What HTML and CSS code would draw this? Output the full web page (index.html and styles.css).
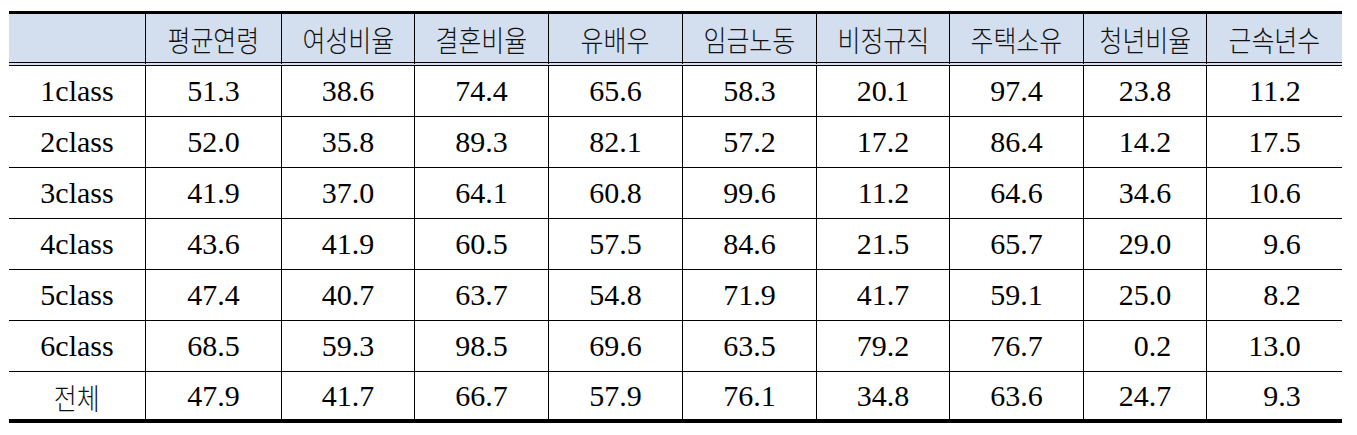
FILE: index.html
```html
<!DOCTYPE html>
<html lang="ko">
<head>
<meta charset="utf-8">
<title>계층별 특성</title>
<link rel="stylesheet" href="styles.css">
</head>
<body>
<div class="wrap">
<table class="stats">
  <colgroup>
    <col><col><col><col><col><col><col><col><col><col>
  </colgroup>
  <thead>
    <tr>
      <th></th>
      <th><span class="ko">평균연령</span></th>
      <th><span class="ko">여성비율</span></th>
      <th><span class="ko">결혼비율</span></th>
      <th><span class="ko">유배우</span></th>
      <th><span class="ko">임금노동</span></th>
      <th><span class="ko">비정규직</span></th>
      <th><span class="ko">주택소유</span></th>
      <th><span class="ko">청년비율</span></th>
      <th><span class="ko">근속년수</span></th>
    </tr>
  </thead>
  <tbody>
    <tr>
      <td>1class</td>
      <td><span class="num">51.3</span></td><td><span class="num">38.6</span></td><td><span class="num">74.4</span></td><td><span class="num">65.6</span></td><td><span class="num">58.3</span></td><td><span class="num">20.1</span></td><td><span class="num">97.4</span></td><td><span class="num">23.8</span></td><td><span class="num">11.2</span></td>
    </tr>
    <tr>
      <td>2class</td>
      <td><span class="num">52.0</span></td><td><span class="num">35.8</span></td><td><span class="num">89.3</span></td><td><span class="num">82.1</span></td><td><span class="num">57.2</span></td><td><span class="num">17.2</span></td><td><span class="num">86.4</span></td><td><span class="num">14.2</span></td><td><span class="num">17.5</span></td>
    </tr>
    <tr>
      <td>3class</td>
      <td><span class="num">41.9</span></td><td><span class="num">37.0</span></td><td><span class="num">64.1</span></td><td><span class="num">60.8</span></td><td><span class="num">99.6</span></td><td><span class="num">11.2</span></td><td><span class="num">64.6</span></td><td><span class="num">34.6</span></td><td><span class="num">10.6</span></td>
    </tr>
    <tr>
      <td>4class</td>
      <td><span class="num">43.6</span></td><td><span class="num">41.9</span></td><td><span class="num">60.5</span></td><td><span class="num">57.5</span></td><td><span class="num">84.6</span></td><td><span class="num">21.5</span></td><td><span class="num">65.7</span></td><td><span class="num">29.0</span></td><td><span class="num">9.6</span></td>
    </tr>
    <tr>
      <td>5class</td>
      <td><span class="num">47.4</span></td><td><span class="num">40.7</span></td><td><span class="num">63.7</span></td><td><span class="num">54.8</span></td><td><span class="num">71.9</span></td><td><span class="num">41.7</span></td><td><span class="num">59.1</span></td><td><span class="num">25.0</span></td><td><span class="num">8.2</span></td>
    </tr>
    <tr>
      <td>6class</td>
      <td><span class="num">68.5</span></td><td><span class="num">59.3</span></td><td><span class="num">98.5</span></td><td><span class="num">69.6</span></td><td><span class="num">63.5</span></td><td><span class="num">79.2</span></td><td><span class="num">76.7</span></td><td><span class="num">0.2</span></td><td><span class="num">13.0</span></td>
    </tr>
    <tr class="total">
      <td><span class="ko">전체</span></td>
      <td><span class="num">47.9</span></td><td><span class="num">41.7</span></td><td><span class="num">66.7</span></td><td><span class="num">57.9</span></td><td><span class="num">76.1</span></td><td><span class="num">34.8</span></td><td><span class="num">63.6</span></td><td><span class="num">24.7</span></td><td><span class="num">9.3</span></td>
    </tr>
  </tbody>
</table>
</div>
</body>
</html>
```

FILE: styles.css
```css
html, body {
  margin: 0;
  padding: 0;
  background: #ffffff;
}

.wrap {
  padding: 11px 0 0 9px;
}

.stats {
  width: 1333px;
  table-layout: fixed;
  border-collapse: separate;
  border-spacing: 0;
  border-top: 3px solid #000;
  font-family: "Liberation Serif", "Times New Roman", "Noto Sans CJK KR", serif;
  font-size: 30px;
  color: #000;
}

.stats col:nth-child(1) { width: 136px; }
.stats col:nth-child(2) { width: 136px; }
.stats col:nth-child(3) { width: 133px; }
.stats col:nth-child(4) { width: 134px; }
.stats col:nth-child(5) { width: 134px; }
.stats col:nth-child(6) { width: 134px; }
.stats col:nth-child(7) { width: 133px; }
.stats col:nth-child(8) { width: 134px; }
.stats col:nth-child(9) { width: 123px; }
.stats col:nth-child(10) { width: 136px; }

.stats th,
.stats td {
  padding: 0;
  text-align: center;
  vertical-align: middle;
  font-weight: normal;
  white-space: nowrap;
}

.stats th + th,
.stats td + td {
  border-left: 1px solid #000;
}

.stats th {
  background: #d3dfee;
  line-height: 48px;
  border-bottom: 4px double #000;
}

.stats td {
  line-height: 50px;
  border-bottom: 1px solid #000;
}

.stats tr.total td {
  line-height: 47px;
  border-bottom: 4px solid #000;
}

.ko {
  display: inline-block;
  font-family: "Noto Sans CJK KR", sans-serif;
  font-size: 29px;
  font-weight: 300;
  color: #111;
  line-height: 1;
  transform: scaleX(0.86);
  vertical-align: middle;
  position: relative;
  top: -2px;
}

.num {
  display: inline-block;
  min-width: 1.75em;
  text-align: right;
}
```
